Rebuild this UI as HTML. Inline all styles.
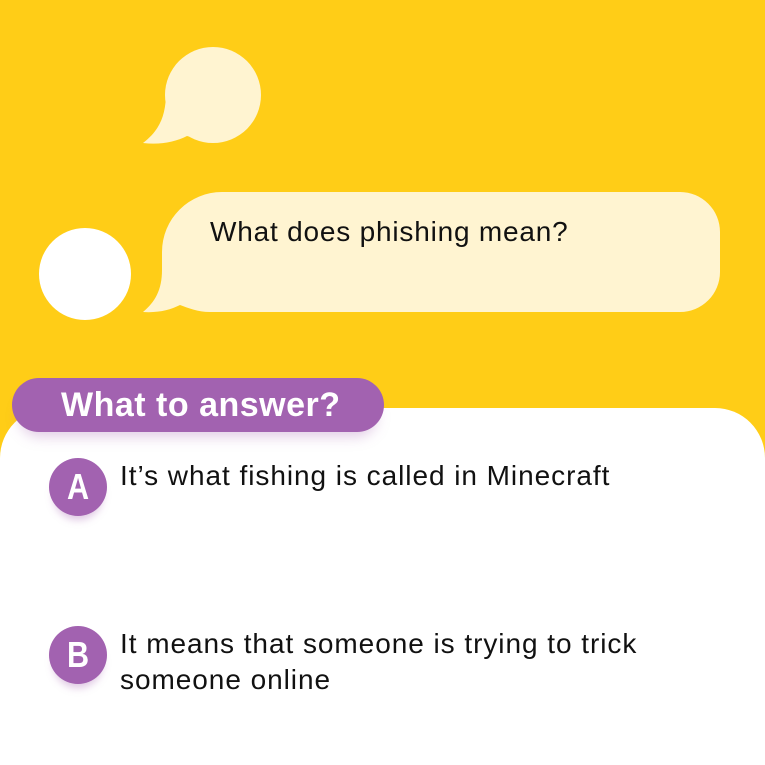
<!DOCTYPE html>
<html><head><style>
html,body{margin:0;width:765px;height:765px;overflow:hidden}
body{background:#FFCD17;font-family:"Liberation Sans",sans-serif;position:relative}
.abs{position:absolute}
.panel{left:0;top:408px;width:765px;height:357px;background:#fff;border-radius:50px 50px 0 0}
.pill{left:12px;top:378px;width:372px;height:54px;border-radius:27px;background:#A262B0;color:#fff;font-weight:bold;font-size:34px;letter-spacing:0.5px;line-height:54px;box-sizing:border-box;padding-left:49px;box-shadow:0 12px 14px -8px rgba(162,98,176,0.35)}
.badge{width:58px;height:58px;border-radius:50%;background:#A262B0;color:#fff;font-weight:bold;font-size:36px;line-height:58px;text-align:center;box-shadow:0 8px 8px -4px rgba(162,98,176,0.35)}
.badge span{display:inline-block;transform:scaleX(0.85)}
.ans{font-size:28px;color:#111;line-height:36px;letter-spacing:0.95px}
</style></head><body>
<svg class="abs" style="left:0;top:0" width="765" height="400">
<circle cx="213" cy="95" r="48" fill="#FFF4D1"/>
<path d="M166 92 C166 115 160 130 143 143 C160 145 175 142 187 136 L213 143 L230 120 Z" fill="#FFF4D1"/>
<path d="M222 192 H680 A40 40 0 0 1 720 232 V272 A40 40 0 0 1 680 312 H210 C198 312 188 308 180 305 C170 310 158 313 143 312 C155 302 162 290 162 270 V252 A60 60 0 0 1 222 192 Z" fill="#FFF4D1"/>
<circle cx="85" cy="274" r="46" fill="#fff"/>
</svg>
<div class="abs" style="left:210px;top:216px;font-size:28px;letter-spacing:0.8px;color:#111">What does phishing mean?</div>
<div class="abs panel"></div>
<div class="abs pill">What to answer?</div>
<div class="abs badge" style="left:49px;top:458px"><span>A</span></div>
<div class="abs ans" style="left:120px;top:458px">It’s what fishing is called in Minecraft</div>
<div class="abs badge" style="left:49px;top:626px"><span>B</span></div>
<div class="abs ans" style="left:120px;top:626px">It means that someone is trying to trick<br>someone online</div>
</body></html>
